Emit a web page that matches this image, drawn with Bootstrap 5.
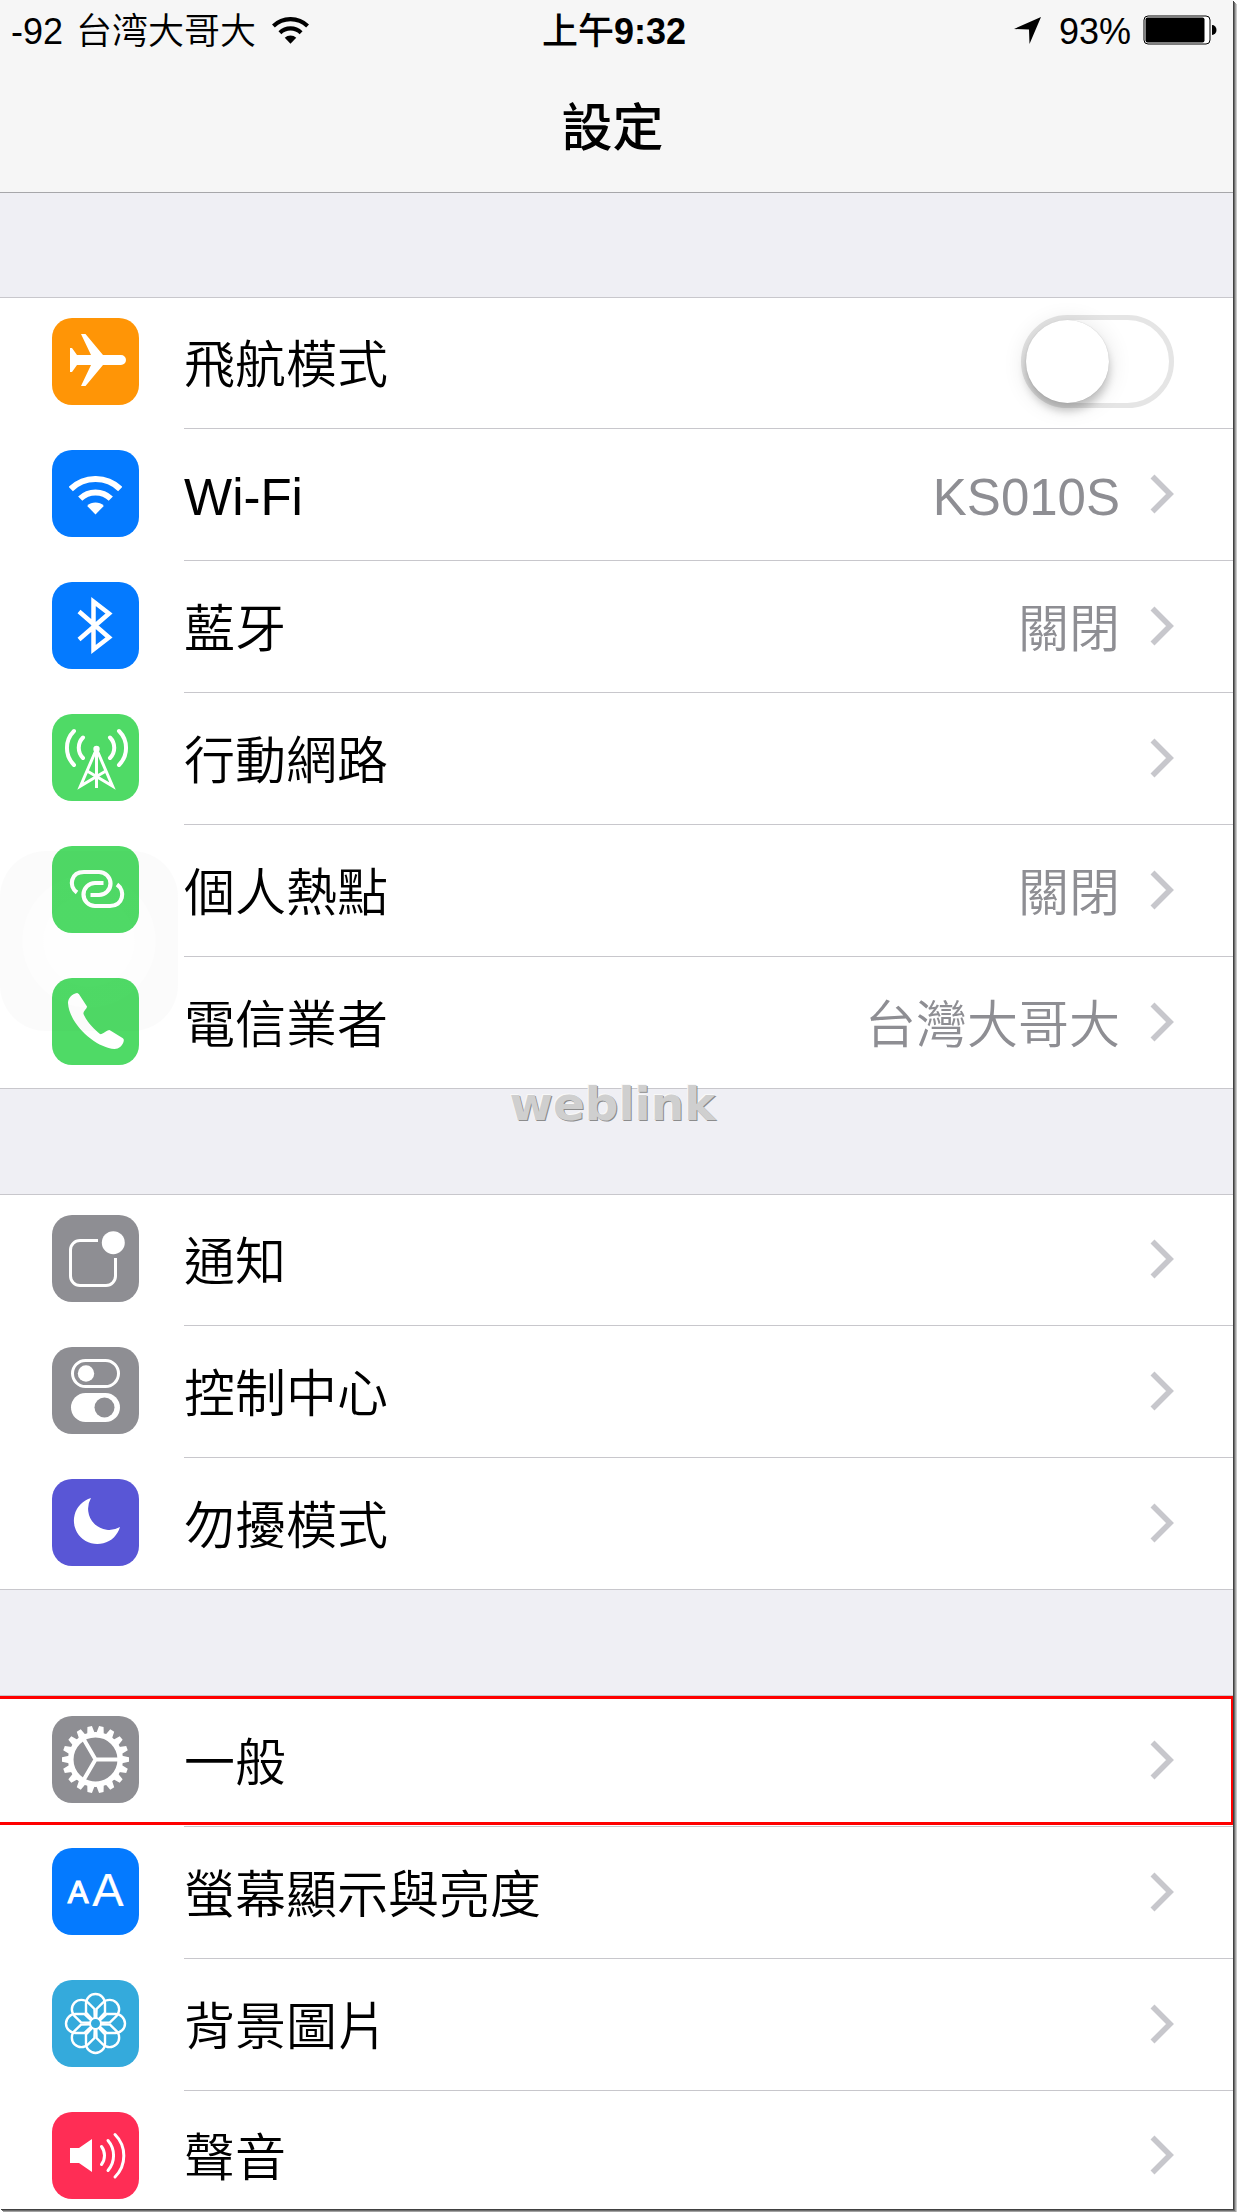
<!DOCTYPE html>
<html lang="zh-Hant">
<head>
<meta charset="utf-8">
<meta name="viewport" content="width=device-width, initial-scale=1">
<title>設定</title>
<link href="https://cdn.jsdelivr.net/npm/bootstrap@5.3.0/dist/css/bootstrap.min.css" rel="stylesheet">
<style>
  body { font-family: "Liberation Sans", "Noto Sans CJK TC", sans-serif; background: #fff; color: #000; }
  .screen { margin: 0 4px 4px 0; background: #efeff4; box-shadow: 1px 1px 0 #414141, 2px 2px 0 #6e6e6e, 3px 3px 0 #a2a2a2, 4px 4px 0 #c9c9c9; }
  .top-area { height: 193px; background: #f6f6f6; border-bottom: 1px solid #a7a7aa; }
  .status { height: 64px; padding: 0 16px 0 11px; font-size: 36px; line-height: 64px; font-weight: 350; }
  .status-side { flex: 1 1 0; }
  .status-side svg { margin-bottom: 4px; }
  .carrier { margin-left: 13px; }
  .clock-period { font-weight: 500; }
  .location { margin-right: 18px; }
  .battery { margin-left: 12px; }
  .screen-title { font-size: 51px; line-height: 60px; font-weight: 500; margin: 35px 8px 0 0; }
  .settings { border-top: 1px solid #c8c7cc; border-bottom: 1px solid #c8c7cc; background: #fff; margin: 0 0 105px; padding: 0; list-style: none; }
  .settings:first-of-type { margin-top: 104px; }
  .settings:last-of-type { margin-bottom: 0; border-bottom: 0; }
  .settings > li + li { padding-top: 1px; }
  .entry { display: flex; padding-left: 52px; color: #000; text-decoration: none; font-size: 51px; font-weight: 350; }
  .tile { width: 87px; height: 87px; margin-top: 20px; margin-right: 45px; border-radius: 20px; flex: none; }
  .entry-body { height: 131px; padding: 0 59px 3px 0; border-bottom: 1px solid #c8c7cc; }
  .settings > li:last-child .entry-body { height: 130px; border-bottom: 0; }
  .settings:last-of-type > li:last-child .entry-body { height: 117px; padding-top: 12px; }
  .entry-name, .entry-value { line-height: 60px; padding-top: 8px; white-space: nowrap; }
  .entry-value { color: #8e8e93; margin-right: 30px; }
  .chevron { width: 24px; height: 40px; flex: none; }
  .orange { background: #ff9506; } .blue { background: #047aff; } .green { background: #4fda66; }
  .gray { background: #8e8e93; } .indigo { background: #5956d6; } .sky { background: #34aadc; } .pink { background: #ff2d55; }
  .toggle-input.form-check-input { position: relative; width: 153px; height: 93px; margin: 0; float: none; border: 5px solid #e5e5e5; border-radius: 47px; background: #fff; }
  .toggle-input.form-check-input::before { content: ""; display: block; width: 83px; height: 83px; border-radius: 50%; background: #fff; box-shadow: 0 8px 8px rgba(0,0,0,.2), 0 3px 24px rgba(0,0,0,.12), 0 0 1px rgba(0,0,0,.2); }
  .toggle-input.form-check-input:checked { background: #4fda66; }
  .toggle-input.form-check-input:checked::before { margin-left: auto; }
  .marker { position: absolute; inset: 0 0 2px 0; border: 3px solid #f00; border-left: 0; border-right-width: 2px; pointer-events: none; }
  .watermark { position: absolute; left: 0; right: 0; bottom: -44px; padding-right: 8px; text-align: center; font: 900 47px/56px "DejaVu Sans", sans-serif; color: #cfcfcf; text-shadow: 1px 1px 0 #8c8c8c, -1px -1px 0 #f8f8f8; pointer-events: none; }
  .assist { position: absolute; left: 0; top: 26px; width: 178px; height: 180px; border-radius: 46px; background: radial-gradient(circle at center, rgba(0,0,0,.004) 0 45px, rgba(0,0,0,.008) 46px 66px, rgba(0,0,0,.014) 67px); pointer-events: none; z-index: 2; }
  svg { display: block; }
  .ln { fill: none; stroke: #fff; }
</style>
</head>
<body>
<svg width="0" height="0" class="position-absolute" aria-hidden="true">
  <symbol id="wifi" viewBox="17 26 53 39">
    <g fill="none" stroke="currentColor" stroke-width="6"><path d="M18.800 39A35.500 35.500 0 0 1 68.200 39"/><path d="M28.200 48.700A22 22 0 0 1 58.800 48.700"/></g>
    <path fill="currentColor" d="M43.500 64.500L35.200 55.900A12 12 0 0 1 51.800 55.900Z"/>
  </symbol>
  <symbol id="chev" viewBox="0 0 24 40"><path d="M2.500 2.500L20 20 2.500 37.500" fill="none" stroke="#c7c7cc" stroke-width="5.600"/></symbol>
  <path id="tooth" d="M70 39.800L77 41.200V45.800L70 47.200ZM17 39.800L10 41.200V45.800L17 47.200Z"/>
  <path id="petal" d="M41 40L34 32.500V23.500A9.500 9.500 0 0 1 53 23.500V32.500L46 40"/>
</svg>

<div class="screen">
  <header class="top-area">
    <div class="status d-flex align-items-center">
      <div class="status-side d-flex align-items-center"><span>-92</span><span class="carrier">台湾大哥大</span>
        <svg class="ms-3" width="37" height="27" role="img" aria-label="Wi-Fi"><use href="#wifi"/></svg></div>
      <div class="fw-bold"><span class="clock-period">上午</span>9:32</div>
      <div class="status-side d-flex align-items-center justify-content-end">
        <svg class="location" width="27" height="27" viewBox="0 0 27 27" aria-hidden="true"><path d="M27 0L15.500 27 15 12.500 0 12Z"/></svg>
        <span>93%</span>
        <svg class="battery" width="74" height="30" viewBox="0 0 74 30" role="img" aria-label="93%"><rect x="1" y="1" width="66" height="28" rx="4" fill="#fff" stroke="#000" stroke-width="1"/><rect x="2.500" y="2.500" width="59" height="25" rx="2"/><path d="M69 10a4.500 5 0 0 1 0 10z"/></svg>
      </div>
    </div>
    <h1 class="screen-title text-center">設定</h1>
  </header>

  <main>
    <ul class="settings position-relative">
      <li><label class="entry" for="airplane">
        <svg class="tile orange" viewBox="0 0 87 87" aria-hidden="true"><path fill="#fff" d="M18 30h2l5 7h14L29 16h4.500L51 37h18a5 5 0 0 1 0 10H51L33.500 68H29L39 47H25l-5 7h-2z"/></svg>
        <span class="entry-body d-flex flex-fill align-items-center justify-content-between"><span class="entry-name">飛航模式</span>
        <input class="form-check-input toggle-input" type="checkbox" role="switch" id="airplane"></span>
      </label></li>
      <li><a class="entry" href="#wifi-settings">
        <svg class="tile blue text-white" viewBox="0 0 87 87" aria-hidden="true"><use href="#wifi" x="17" y="26" width="53" height="39"/></svg>
        <span class="entry-body d-flex flex-fill align-items-center"><span class="entry-name me-auto">Wi-Fi</span><span class="entry-value">KS010S</span><svg class="chevron"><use href="#chev"/></svg></span>
      </a></li>
      <li><a class="entry" href="#bluetooth">
        <svg class="tile blue" viewBox="0 0 87 87" aria-hidden="true"><path class="ln" stroke-width="4.500" d="M27 29.500L57 55.500 41.500 67.500V19.500L57 31.500 27 57.500"/></svg>
        <span class="entry-body d-flex flex-fill align-items-center"><span class="entry-name me-auto">藍牙</span><span class="entry-value">關閉</span><svg class="chevron"><use href="#chev"/></svg></span>
      </a></li>
      <li><a class="entry" href="#cellular">
        <svg class="tile green" viewBox="0 0 87 87" aria-hidden="true"><g class="ln" stroke-linecap="round" stroke-width="4"><path d="M22 17A24 24 0 0 0 22 51M67 17A24 24 0 0 1 67 51M31 23.500A14.500 14.500 0 0 0 31 44M58 23.500A14.500 14.500 0 0 1 58 44"/><path stroke-width="3" d="M44.500 35L28.500 72 53 57.500M44.500 35L60.500 72 36 57.500"/><path stroke-linecap="butt" stroke-width="3" d="M44.500 35V74"/></g><circle cx="44.500" cy="35" r="3.200" fill="#fff"/></svg>
        <span class="entry-body d-flex flex-fill align-items-center"><span class="entry-name me-auto">行動網路</span><svg class="chevron"><use href="#chev"/></svg></span>
      </a></li>
      <li class="position-relative"><a class="entry" href="#hotspot">
        <svg class="tile green" viewBox="0 0 87 87" aria-hidden="true"><path class="ln" stroke-width="4.200" d="M25 46.500C16 40 19 26 32 26H47A11.500 11.500 0 0 1 47 49H38.500M65 38.500C74 45 71 60 58 60H43A11.500 11.500 0 0 1 43 37H51.500"/></svg>
        <span class="entry-body d-flex flex-fill align-items-center"><span class="entry-name me-auto">個人熱點</span><span class="entry-value">關閉</span><svg class="chevron"><use href="#chev"/></svg></span>
      </a><span class="assist"></span></li>
      <li class="position-relative"><a class="entry" href="#carrier">
        <svg class="tile green" viewBox="0 0 87 87" aria-hidden="true"><path fill="#fff" d="M16 25C16 20 20 16 25 15C26 15 27 16 27.500 17L35 28.500C35 31 31 33 31.500 36C35 44 42 51 48 56C50 57 54 52.500 57.500 52L70.500 60C72 61 72 62 71.500 64C70 68 67 71 62.500 71C44 70 17 46 16 25Z"/></svg>
        <span class="entry-body d-flex flex-fill align-items-center"><span class="entry-name me-auto">電信業者</span><span class="entry-value">台灣大哥大</span><svg class="chevron"><use href="#chev"/></svg></span>
      </a><span class="watermark">weblink</span></li>
    </ul>

    <ul class="settings">
      <li><a class="entry" href="#notifications">
        <svg class="tile gray" viewBox="0 0 87 87" aria-hidden="true"><path class="ln" stroke-width="3" d="M46 25.500H28a9.500 9.500 0 0 0-9.500 9.500V61a9.500 9.500 0 0 0 9.500 9.500H54a9.500 9.500 0 0 0 9.500-9.500V43"/><circle cx="61.300" cy="27.700" r="11.500" fill="#fff"/></svg>
        <span class="entry-body d-flex flex-fill align-items-center"><span class="entry-name me-auto">通知</span><svg class="chevron"><use href="#chev"/></svg></span>
      </a></li>
      <li><a class="entry" href="#control-center">
        <svg class="tile gray" viewBox="0 0 87 87" aria-hidden="true"><rect class="ln" stroke-width="3" x="20.500" y="13.500" width="46" height="26" rx="13"/><circle cx="34" cy="26.500" r="8.200" fill="#fff"/><rect x="19" y="46" width="49" height="29" rx="14.500" fill="#fff"/><circle cx="52.500" cy="60.500" r="10" fill="#8e8e93"/></svg>
        <span class="entry-body d-flex flex-fill align-items-center"><span class="entry-name me-auto">控制中心</span><svg class="chevron"><use href="#chev"/></svg></span>
      </a></li>
      <li><a class="entry" href="#do-not-disturb">
        <svg class="tile indigo" viewBox="0 0 87 87" aria-hidden="true"><path fill="#fff" d="M39 19A23.500 23.500 0 1 0 68 48A21.200 21.200 0 0 1 39 19Z"/></svg>
        <span class="entry-body d-flex flex-fill align-items-center"><span class="entry-name me-auto">勿擾模式</span><svg class="chevron"><use href="#chev"/></svg></span>
      </a></li>
    </ul>

    <ul class="settings">
      <li class="position-relative"><a class="entry" href="#general">
        <svg class="tile gray" viewBox="0 0 87 87" aria-hidden="true"><g fill="#fff"><use href="#tooth"/><use href="#tooth" transform="rotate(20 43.500 43.500)"/><use href="#tooth" transform="rotate(40 43.500 43.500)"/><use href="#tooth" transform="rotate(60 43.500 43.500)"/><use href="#tooth" transform="rotate(80 43.500 43.500)"/><use href="#tooth" transform="rotate(100 43.500 43.500)"/><use href="#tooth" transform="rotate(120 43.500 43.500)"/><use href="#tooth" transform="rotate(140 43.500 43.500)"/><use href="#tooth" transform="rotate(160 43.500 43.500)"/></g><circle class="ln" cx="43.500" cy="43.500" r="24.700" stroke-width="5.500"/><path class="ln" stroke-width="4" d="M31 22L43.500 43.500H68M43.500 43.500L31 65"/></svg>
        <span class="entry-body d-flex flex-fill align-items-center"><span class="entry-name me-auto">一般</span><svg class="chevron"><use href="#chev"/></svg></span>
      </a><span class="marker"></span></li>
      <li><a class="entry" href="#display">
        <svg class="tile blue" viewBox="0 0 87 87" aria-hidden="true"><g fill="#fff" stroke="#fff" font-family="Liberation Sans, sans-serif" font-weight="400" text-anchor="middle"><text x="26" y="55" font-size="31" stroke-width="1.200">A</text><text x="56" y="58" font-size="47" stroke-width=".2">A</text></g></svg>
        <span class="entry-body d-flex flex-fill align-items-center"><span class="entry-name me-auto">螢幕顯示與亮度</span><svg class="chevron"><use href="#chev"/></svg></span>
      </a></li>
      <li><a class="entry" href="#wallpaper">
        <svg class="tile sky" viewBox="0 0 87 87" aria-hidden="true"><g class="ln" stroke-width="2.400"><use href="#petal"/><use href="#petal" transform="rotate(45 43.500 43.500)"/><use href="#petal" transform="rotate(90 43.500 43.500)"/><use href="#petal" transform="rotate(135 43.500 43.500)"/><use href="#petal" transform="rotate(180 43.500 43.500)"/><use href="#petal" transform="rotate(225 43.500 43.500)"/><use href="#petal" transform="rotate(270 43.500 43.500)"/><use href="#petal" transform="rotate(315 43.500 43.500)"/></g><circle cx="43.500" cy="43.500" r="5.500" fill="#34aadc" stroke="#fff" stroke-width="2"/></svg>
        <span class="entry-body d-flex flex-fill align-items-center"><span class="entry-name me-auto">背景圖片</span><svg class="chevron"><use href="#chev"/></svg></span>
      </a></li>
      <li><a class="entry" href="#sounds">
        <svg class="tile pink" viewBox="0 0 87 87" aria-hidden="true"><path fill="#fff" d="M18 36H27L40 27V60L27 51H18Z"/><path class="ln" stroke-width="3" stroke-linecap="round" d="M49.500 34.500A15 15 0 0 1 49.500 52.500M56 28.500A23 23 0 0 1 56 58.500M63 22.500A30 30 0 0 1 63 65"/></svg>
        <span class="entry-body d-flex flex-fill align-items-center"><span class="entry-name me-auto">聲音</span><svg class="chevron"><use href="#chev"/></svg></span>
      </a></li>
    </ul>
  </main>
</div>
<script src="https://cdn.jsdelivr.net/npm/bootstrap@5.3.0/dist/js/bootstrap.bundle.min.js"></script>
</body>
</html>
